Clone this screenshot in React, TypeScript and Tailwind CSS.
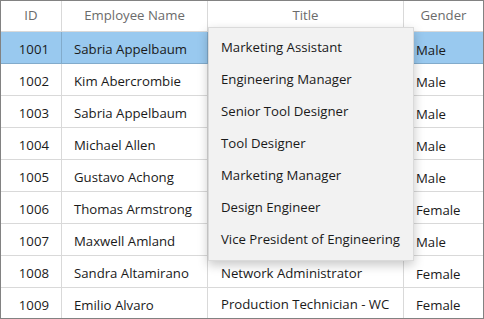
import React from "react";

const rows = [
  { id: "1001", name: "Sabria Appelbaum", title: "Marketing Assistant", gender: "Male" },
  { id: "1002", name: "Kim Abercrombie", title: "Engineering Manager", gender: "Male" },
  { id: "1003", name: "Sabria Appelbaum", title: "Senior Tool Designer", gender: "Male" },
  { id: "1004", name: "Michael Allen", title: "Tool Designer", gender: "Male" },
  { id: "1005", name: "Gustavo Achong", title: "Marketing Manager", gender: "Male" },
  { id: "1006", name: "Thomas Armstrong", title: "Design Engineer", gender: "Female" },
  { id: "1007", name: "Maxwell Amland", title: "Vice President of Engineering", gender: "Male" },
  { id: "1008", name: "Sandra Altamirano", title: "Network Administrator", gender: "Female" },
  { id: "1009", name: "Emilio Alvaro", title: "Production Technician - WC", gender: "Female" },
];

const options = [
  "Marketing Assistant",
  "Engineering Manager",
  "Senior Tool Designer",
  "Tool Designer",
  "Marketing Manager",
  "Design Engineer",
  "Vice President of Engineering",
];

const App = () => {
  return (
    <div
      className="relative w-[484px] h-[319px] border border-[#828282] bg-white overflow-hidden text-[13.2px] text-[#1a1a1a] whitespace-nowrap"
      style={{ fontFamily: '"Open Sans", "Noto Sans", sans-serif' }}
    >
      <div className="grid grid-cols-[61px_146px_196px_79px] h-[31px] text-[#6b6b6b] border-b border-black/15">
        <div className="flex items-center justify-center border-r border-black/15">ID</div>
        <div className="flex items-center justify-center border-r border-black/15">Employee Name</div>
        <div className="flex items-center justify-center border-r border-black/15">Title</div>
        <div className="flex items-center justify-center">Gender</div>
      </div>
      {rows.map((row, i) => (
        <div
          key={row.id}
          className={`grid grid-cols-[61px_146px_196px_79px] ${
            i === rows.length - 1 ? "h-[30px]" : "h-[32px] border-b border-black/15"
          } ${i === 0 ? "bg-[#99c9ef]" : ""}`}
        >
          <div className="flex items-center justify-end pr-[12px] pt-[5px] border-r border-black/15 overflow-hidden">{row.id}</div>
          <div className="flex items-center pl-[12px] pt-[5px] border-r border-black/15 overflow-hidden">{row.name}</div>
          <div className="flex items-center pl-[13px] pt-[4px] border-r border-black/15 overflow-hidden">{row.title}</div>
          <div className="flex items-center pl-[12px] pt-[6px] overflow-hidden">{row.gender}</div>
        </div>
      ))}
      <div className="absolute left-[207px] top-[26px] w-[206px] h-[234px] bg-[#f2f2f2] border border-[#dadada] shadow-[0_4px_10px_rgba(0,0,0,0.22)] pt-[4px]">
        {options.map((o) => (
          <div key={o} className="h-[32px] flex items-center pl-[12px]">
            {o}
          </div>
        ))}
      </div>
    </div>
  );
};

export default App;
